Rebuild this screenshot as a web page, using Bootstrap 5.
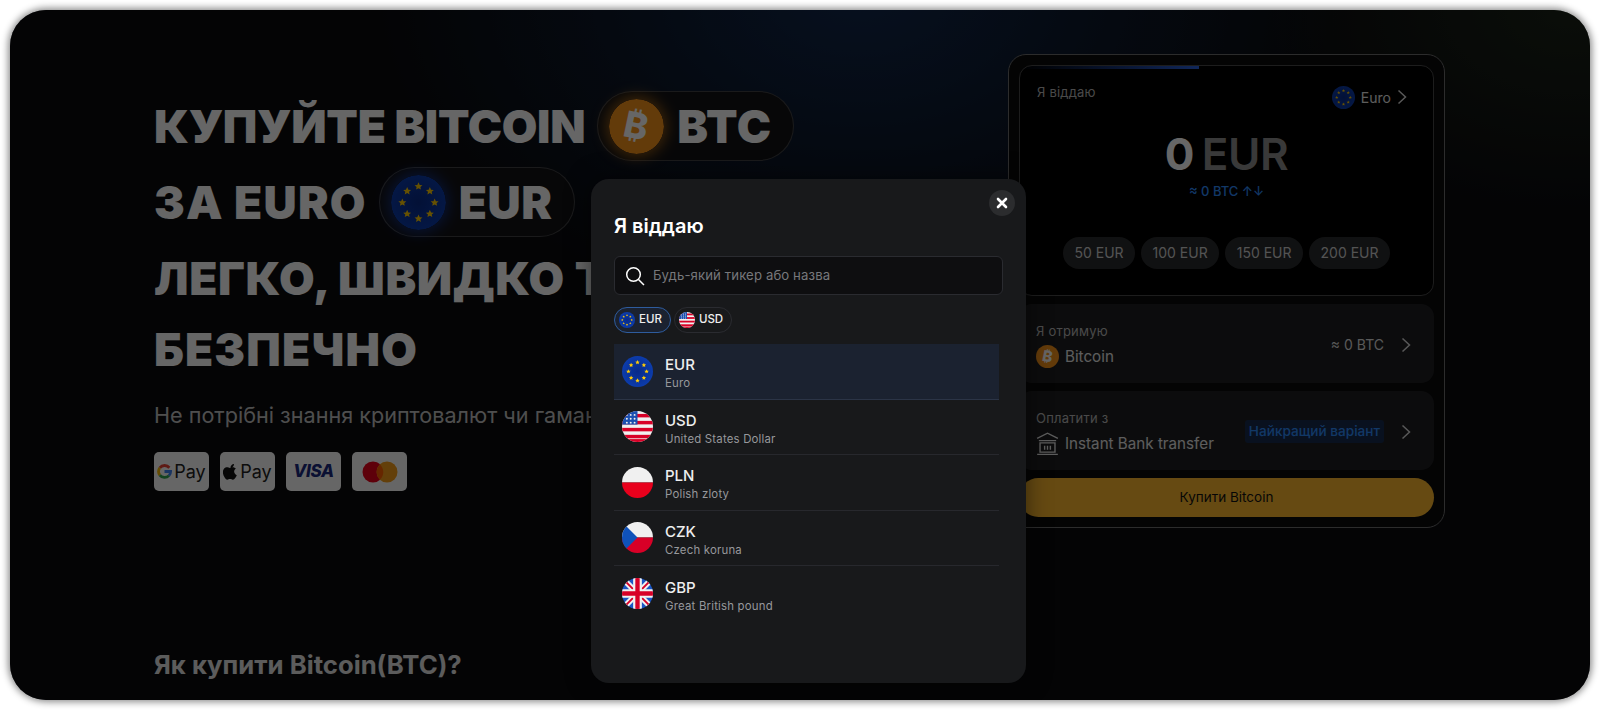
<!DOCTYPE html>
<html lang="uk">

<head>
  <meta charset="utf-8">
  <meta name="viewport" content="width=device-width">
  <title>Купити Bitcoin</title>
  <link href="https://cdn.jsdelivr.net/npm/bootstrap@5.3.3/dist/css/bootstrap.min.css" rel="stylesheet"/>
  <style>
    html, body { height: 100%; }
    body { background: #fff; font-family: Inter, "Noto Sans", sans-serif; overflow: hidden; }

    .frame {
      position: relative; margin: 10px; height: 690px; width: 1580px; overflow: hidden;
      border-radius: 36px; box-shadow: 0 0 7px 2px rgba(0,0,0,.45);
      background:
        radial-gradient(480px 330px at 850px -20px, #10294f 0%, rgba(16,41,79,.45) 50%, rgba(16,41,79,0) 100%),
        radial-gradient(300px 200px at 1560px 0, #1a2318 0%, rgba(26,35,24,0) 100%),
        #0b0b0e;
    }
    .dim { position: absolute; inset: 0; background: rgba(0,0,0,.6); z-index: 2; }

    /* hero */
    .hero { padding: 81px 0 0 144px; width: 998px; flex: none; color: #fff; }
    .hero-title { font-size: 46px; font-weight: 900; letter-spacing: -.3px; margin: 0; gap: 6px; white-space: nowrap; line-height: 1; }
    .hero-line { height: 70px; gap: 12px; }
    .hero-line-mid { letter-spacing: .6px; }
    .hero-line-wide { letter-spacing: 1.2px; }
    .hero-line-last { height: 60px; }
    .ticker-pill { height: 70px; padding: 0 21px 0 11px; gap: 13px; border-radius: 35px; border: 1px solid rgba(255,255,255,.2); background: #131316; letter-spacing: .6px; }
    .ticker-pill svg { width: 55px; height: 55px; border-radius: 50%; }
    .glow-btc { box-shadow: 0 0 14px 3px rgba(247,147,26,.55); }
    .glow-eur { box-shadow: 0 0 14px 3px rgba(20,70,200,.55); }
    .hero-sub { font-size: 21.6px; line-height: 26px; margin: 23px 0 0; white-space: nowrap; color: #c4c4c4; }
    .pay-row { margin-top: 24px; gap: 11px; }
    .pay-tile { width: 55px; height: 39px; background: #fff; border-radius: 5px; gap: 2px; color: #222; font-size: 18px; font-weight: 400; }
    .pay-visa { font-style: italic; font-weight: 800; color: #1a2a80; font-size: 17px; letter-spacing: -.3px; }
    .how-title { font-size: 25.7px; line-height: 30px; font-weight: 700; margin: 159px 0 0; color: #e6e6e6; }

    /* widget on the right */
    .widget { width: 437px; height: 474px; margin-top: 44px; flex: none; padding: 10px; gap: 8px; border: 1px solid #6e6e6e; border-radius: 18px; background: #0a0a0c; }
    .amount-card { position: relative; height: 231px; flex: none; padding: 16px 17px 0; border: 1px solid #4a4a4a; border-radius: 13px; background: #000; overflow: hidden; }
    .amount-card::before { content: ""; position: absolute; top: 0; left: 0; width: 179px; height: 3px; background: linear-gradient(90deg, rgba(30,90,230,0), #2a62e0); }
    .field-label { font-size: 13px; line-height: 20px; color: #b8b8b8; letter-spacing: .2px; }
    .amount-head { height: 45px; }
    .cur-pick { gap: 6px; font-size: 14px; color: #e8e8e8; padding-right: 9px; height: 30px; }
    .cur-pick svg.flag { width: 23px; height: 23px; }
    .chev { width: 10px; height: 16px; fill: none; stroke: #ddd; stroke-width: 1.5; }
    .amount-big { font-size: 44px; line-height: 54px; font-weight: 600; color: #8f8f8f; letter-spacing: -.4px; word-spacing: -3px; }
    .amount-big b { color: #fff; font-weight: 700; }
    .amount-rate { font-size: 13px; line-height: 20px; color: #2d8cff; font-weight: 500; }
    .preset-row { margin-top: 36px; gap: 6px; }
    .preset { height: 32px; padding: 0 11.5px; border-radius: 16px; background: #2a2b2d; color: #d0d0d0; font-size: 14px; line-height: 32px; }
    .pick-row { height: 79px; flex: none; padding: 2px 23px 0 17px; border-radius: 13px; background: #202022; }
    .pick-val { gap: 6px; margin-top: 4px; font-size: 15.2px; color: #e8e8e8; line-height: 24px; }
    .pick-val svg { width: 23px; height: 23px; }
    .pick-side { font-size: 14px; color: #dedede; gap: 17px; }
    .best-tag { font-size: 13.6px; line-height: 23px; padding: 0 4px; color: #2d8cff; background: #182c4e; border-radius: 3px; font-weight: 500; }
    .buy-btn { height: 39px; flex: none; border-radius: 20px; border: 0; background: #ffba2e; color: #111; font-size: 13.5px; font-weight: 400; }
    .buy-btn:hover { background: #ffba2e; color: #111; }

    /* currency sheet */
    .sheet { position: absolute; left: 581px; top: 169px; width: 435px; height: 504px; z-index: 3; padding: 35px 23px 0 23px; background: #18191b; border: 0; border-radius: 18px; box-shadow: 0 0 24px rgba(0,0,0,.5); color: #fff; }
    .sheet-close { position: absolute; top: 11px; right: 11px; width: 26px; height: 26px; padding: 0; border: 0; border-radius: 50%; background: #2b2c2e; }
    .sheet-title { font-size: 20px; line-height: 24px; font-weight: 600; margin: 0; }
    .find-box { margin-top: 18px; height: 39px; padding: 0 10px; gap: 8px; background: #0e0e10; border: 1px solid #2a2b30; border-radius: 6px; }
    .find-box input { background: transparent; border: 0; box-shadow: none; padding: 1px 0 0; font-size: 13.2px; letter-spacing: .1px; color: #fff; }
    .find-box input::placeholder { color: #77787c; opacity: 1; }
    .find-box input:focus { background: transparent; box-shadow: none; }
    .quick-row { margin-top: 12px; gap: 3px; }
    .quick-chip { height: 26px; padding: 0 8px 0 4px; gap: 4px; font-size: 11.5px; font-weight: 500; border: 1px solid #2a2b30; border-radius: 13px; color: #eee; }
    .quick-chip svg { width: 16px; height: 16px; }
    .quick-on { border-color: #2e5c9e; background: #1b2230; }
    .cur-list { margin-top: 11px; width: 385px; --bs-list-group-bg: transparent; --bs-list-group-border-color: #27282d; --bs-list-group-color: #eee; }
    .cur-item { height: 55.5px; padding: 0 8px; gap: 12px; }
    .cur-item svg { width: 31px; height: 31px; flex: none; }
    .cur-text { padding-top: 4px; }
    .cur-on { background: #1b2230; border-bottom-color: #2b3446 !important; }
    .cur-code { font-size: 15px; line-height: 20px; font-weight: 500; }
    .cur-name { font-size: 11.4px; line-height: 16px; color: #97989c; letter-spacing: .2px; }
  </style>
</head>

<body>

  <svg width="0" height="0" class="position-absolute" aria-hidden="true">
    <defs>
      <clipPath id="round"><circle cx="16" cy="16" r="16"/></clipPath>
      <polygon id="star" points="0,-2.4 .7,-.8 2.3,-.7 1.1,.4 1.4,1.9 0,1.1 -1.4,1.9 -1.1,.4 -2.3,-.7 -.7,-.8"/>
      <radialGradient id="eu-fill"><stop offset="0" stop-color="#082a88"/><stop offset="1" stop-color="#0c3cac"/></radialGradient>
      <symbol id="flag-eu" viewBox="0 0 32 32">
        <circle cx="16" cy="16" r="16" fill="url(#eu-fill)"/>
        <g fill="#ffcb05">
          <use href="#star" x="16" y="6.6"/><use href="#star" x="22.6" y="9.4"/>
          <use href="#star" x="25.4" y="16"/><use href="#star" x="22.6" y="22.6"/>
          <use href="#star" x="16" y="25.4"/><use href="#star" x="9.4" y="22.6"/>
          <use href="#star" x="6.6" y="16"/><use href="#star" x="9.4" y="9.4"/>
        </g>
      </symbol>
      <symbol id="flag-us" viewBox="0 0 32 32">
        <g clip-path="url(#round)">
          <rect width="32" height="32" fill="#f0f0f0"/>
          <g fill="#d80027">
            <rect y="3" width="32" height="3.6"/><rect y="10.2" width="32" height="3.6"/>
            <rect y="17.4" width="32" height="3.6"/><rect y="24.6" width="32" height="3.6"/>
            <rect y="29" width="32" height="3"/>
          </g>
          <rect width="16" height="14" fill="#1a4fb0"/>
          <g fill="#f0f0f0">
            <circle cx="5" cy="4" r="1"/><circle cx="9" cy="4" r="1"/><circle cx="13" cy="4" r="1"/>
            <circle cx="5" cy="8" r="1"/><circle cx="9" cy="8" r="1"/><circle cx="13" cy="8" r="1"/>
            <circle cx="5" cy="12" r="1"/><circle cx="9" cy="12" r="1"/><circle cx="13" cy="12" r="1"/>
          </g>
        </g>
      </symbol>
      <symbol id="flag-pl" viewBox="0 0 32 32">
        <g clip-path="url(#round)">
          <rect width="32" height="16" fill="#f0f0f0"/>
          <rect y="16" width="32" height="16" fill="#e8001c"/>
        </g>
      </symbol>
      <symbol id="flag-cz" viewBox="0 0 32 32">
        <g clip-path="url(#round)">
          <rect width="32" height="16" fill="#f0f0f0"/>
          <rect y="16" width="32" height="16" fill="#d80027"/>
          <polygon points="0,0 16,16 0,32" fill="#0f52ba"/>
        </g>
      </symbol>
      <symbol id="flag-gb" viewBox="0 0 32 32">
        <g clip-path="url(#round)">
          <rect width="32" height="32" fill="#1a56c4"/>
          <path d="M0 0L32 32M32 0L0 32" stroke="#f0f0f0" stroke-width="6"/>
          <path d="M2 2L13 13M30 2L19 13M2 30L13 19M30 30L19 19" stroke="#d80027" stroke-width="2"/>
          <path d="M16 0V32M0 16H32" stroke="#f0f0f0" stroke-width="9"/>
          <path d="M16 0V32M0 16H32" stroke="#d80027" stroke-width="4.5"/>
        </g>
      </symbol>
      <symbol id="coin-btc" viewBox="0 0 32 32">
        <circle cx="16" cy="16" r="16" fill="#f7931a"/>
        <text x="16" y="23" text-anchor="middle" font-family="Inter, DejaVu Sans, sans-serif" font-size="21" font-weight="800" fill="#fff" transform="rotate(12 16 16)">₿</text>
      </symbol>
    </defs>
  </svg>

  <div class="frame d-flex">

    <div class="hero">
      <h1 class="hero-title d-flex flex-column">
        <span class="hero-line d-flex align-items-center">КУПУЙТЕ BITCOIN
          <span class="ticker-pill d-inline-flex align-items-center">
            <svg class="glow-btc"><use href="#coin-btc"/></svg>BTC
          </span>
        </span>
        <span class="hero-line hero-line-wide d-flex align-items-center">ЗА EURO
          <span class="ticker-pill d-inline-flex align-items-center">
            <svg class="glow-eur"><use href="#flag-eu"/></svg>EUR
          </span>
        </span>
        <span class="hero-line hero-line-mid d-flex align-items-center">ЛЕГКО, ШВИДКО ТА</span>
        <span class="hero-line hero-line-wide hero-line-last d-flex align-items-center">БЕЗПЕЧНО</span>
      </h1>
      <p class="hero-sub">Не потрібні знання криптовалют чи гаманців</p>
      <div class="pay-row d-flex">
        <div class="pay-tile d-flex align-items-center justify-content-center">
          <svg width="15" height="15" viewBox="0 0 16 16" fill="none" stroke-width="3">
            <path d="M13.2 4A6.5 6.5 0 0 0 3 4.2" stroke="#ea4335"/>
            <path d="M3 4.2A6.5 6.5 0 0 0 3 11.8" stroke="#fbbc05"/>
            <path d="M3 11.8A6.5 6.5 0 0 0 12.8 12.4" stroke="#34a853"/>
            <path d="M12.8 12.4A6.5 6.5 0 0 0 14.5 8H8" stroke="#4285f4"/>
          </svg>
          <span>Pay</span>
        </div>
        <div class="pay-tile d-flex align-items-center justify-content-center">
          <svg width="15" height="17" viewBox="0 0 14 16" fill="#111">
            <path d="M10.2 1c.1 1-.3 1.900-.9 2.600-.6.700-1.500 1.100-2.300 1-.1-.9.300-1.900.9-2.500C8.500 1.400 9.500 1 10.200 1zM12.900 11.600c-.4.900-.6 1.300-1.100 2-.7 1-1.500 2.100-2.600 2.100-1 0-1.300-.6-2.600-.6-1.300 0-1.600.6-2.600.6-1.100 0-1.900-1-2.500-2-1.900-2.800-2.100-6.100-.9-7.800C1.400 4.700 2.500 4.100 3.600 4.100c1.200 0 1.900.6 2.900.6.900 0 1.500-.6 2.800-.6 1 0 2 .5 2.700 1.400-2.400 1.300-2 4.700.9 6.100z"/>
          </svg>
          <span>Pay</span>
        </div>
        <div class="pay-tile d-flex align-items-center justify-content-center"><span class="pay-visa">VISA</span></div>
        <div class="pay-tile d-flex align-items-center justify-content-center">
          <svg width="36" height="22" viewBox="0 0 36 22">
            <circle cx="11" cy="11" r="10.500" fill="#eb001b"/>
            <circle cx="25" cy="11" r="10.500" fill="#f79e1b"/>
            <path d="M18 3.400a10.500 10.500 0 0 1 0 15.200a10.500 10.500 0 0 1 0-15.200z" fill="#ff5f00"/>
          </svg>
        </div>
      </div>
      <h2 class="how-title">Як купити Bitcoin(BTC)?</h2>
    </div>

    <div class="widget d-flex flex-column">
      <div class="amount-card">
        <div class="amount-head d-flex justify-content-between align-items-start">
          <span class="field-label">Я віддаю</span>
          <span class="cur-pick d-flex align-items-center">
            <svg class="flag"><use href="#flag-eu"/></svg>Euro
            <svg class="chev" viewBox="0 0 10 16"><path d="M1.500 1.500L8.500 8L1.500 14.500"/></svg>
          </span>
        </div>
        <div class="amount-big text-center"><b>0</b> EUR</div>
        <div class="amount-rate text-center">≈ 0 BTC ↑↓</div>
        <div class="preset-row d-flex justify-content-center">
          <span class="preset">50 EUR</span>
          <span class="preset">100 EUR</span>
          <span class="preset">150 EUR</span>
          <span class="preset">200 EUR</span>
        </div>
      </div>

      <div class="pick-row d-flex justify-content-between align-items-center">
        <div>
          <div class="field-label">Я отримую</div>
          <div class="pick-val d-flex align-items-center">
            <svg><use href="#coin-btc"/></svg>Bitcoin
          </div>
        </div>
        <div class="pick-side d-flex align-items-center">
          <span>≈ 0 BTC</span>
          <svg class="chev" viewBox="0 0 10 16"><path d="M1.500 1.500L8.500 8L1.500 14.500"/></svg>
        </div>
      </div>

      <div class="pick-row d-flex justify-content-between align-items-center">
        <div>
          <div class="field-label">Оплатити з</div>
          <div class="pick-val d-flex align-items-center">
            <svg viewBox="2 2 20 20" fill="none" stroke="#e8e8e8" stroke-width="1.200">
              <path d="M3 7.500L12 3l9 4.500M4.500 9.500h15M5.500 11.500h13v8h-13zM3 21.500h18M9.500 14v3.500M12 14v3.500M14.500 14v3.500"/>
            </svg>Instant Bank transfer
          </div>
        </div>
        <div class="pick-side d-flex align-items-center">
          <span class="best-tag">Найкращий варіант</span>
          <svg class="chev" viewBox="0 0 10 16"><path d="M1.500 1.500L8.500 8L1.500 14.500"/></svg>
        </div>
      </div>

      <button class="btn buy-btn w-100" type="button">Купити Bitcoin</button>
    </div>

    <div class="dim"></div>

    <div class="sheet card">
      <button class="sheet-close btn d-flex align-items-center justify-content-center" type="button" aria-label="Закрити">
        <svg width="12" height="12" viewBox="0 0 12 12"><path d="M2 2L10 10M10 2L2 10" stroke="#fff" stroke-width="2.600" stroke-linecap="round"/></svg>
      </button>
      <h3 class="sheet-title">Я віддаю</h3>
      <div class="find-box d-flex align-items-center">
        <svg width="20" height="20" viewBox="0 0 20 20" fill="none" stroke="#fff" stroke-width="1.500" class="flex-shrink-0">
          <circle cx="8.500" cy="8.500" r="6.800"/><path d="M13.500 13.500L19 19"/>
        </svg>
        <input class="form-control" type="text" placeholder="Будь-який тикер або назва">
      </div>
      <div class="quick-row d-flex">
        <span class="quick-chip quick-on d-flex align-items-center"><svg><use href="#flag-eu"/></svg>EUR</span>
        <span class="quick-chip d-flex align-items-center"><svg><use href="#flag-us"/></svg>USD</span>
      </div>
      <div class="cur-list list-group list-group-flush">
        <div class="cur-item cur-on list-group-item d-flex align-items-center">
          <svg><use href="#flag-eu"/></svg>
          <div class="cur-text"><div class="cur-code">EUR</div><div class="cur-name">Euro</div></div>
        </div>
        <div class="cur-item list-group-item d-flex align-items-center">
          <svg><use href="#flag-us"/></svg>
          <div class="cur-text"><div class="cur-code">USD</div><div class="cur-name">United States Dollar</div></div>
        </div>
        <div class="cur-item list-group-item d-flex align-items-center">
          <svg><use href="#flag-pl"/></svg>
          <div class="cur-text"><div class="cur-code">PLN</div><div class="cur-name">Polish zloty</div></div>
        </div>
        <div class="cur-item list-group-item d-flex align-items-center">
          <svg><use href="#flag-cz"/></svg>
          <div class="cur-text"><div class="cur-code">CZK</div><div class="cur-name">Czech koruna</div></div>
        </div>
        <div class="cur-item list-group-item d-flex align-items-center">
          <svg><use href="#flag-gb"/></svg>
          <div class="cur-text"><div class="cur-code">GBP</div><div class="cur-name">Great British pound</div></div>
        </div>
      </div>
    </div>

  </div>

  <script src="https://cdn.jsdelivr.net/npm/bootstrap@5.3.3/dist/js/bootstrap.bundle.min.js"></script>
</body>

</html>
